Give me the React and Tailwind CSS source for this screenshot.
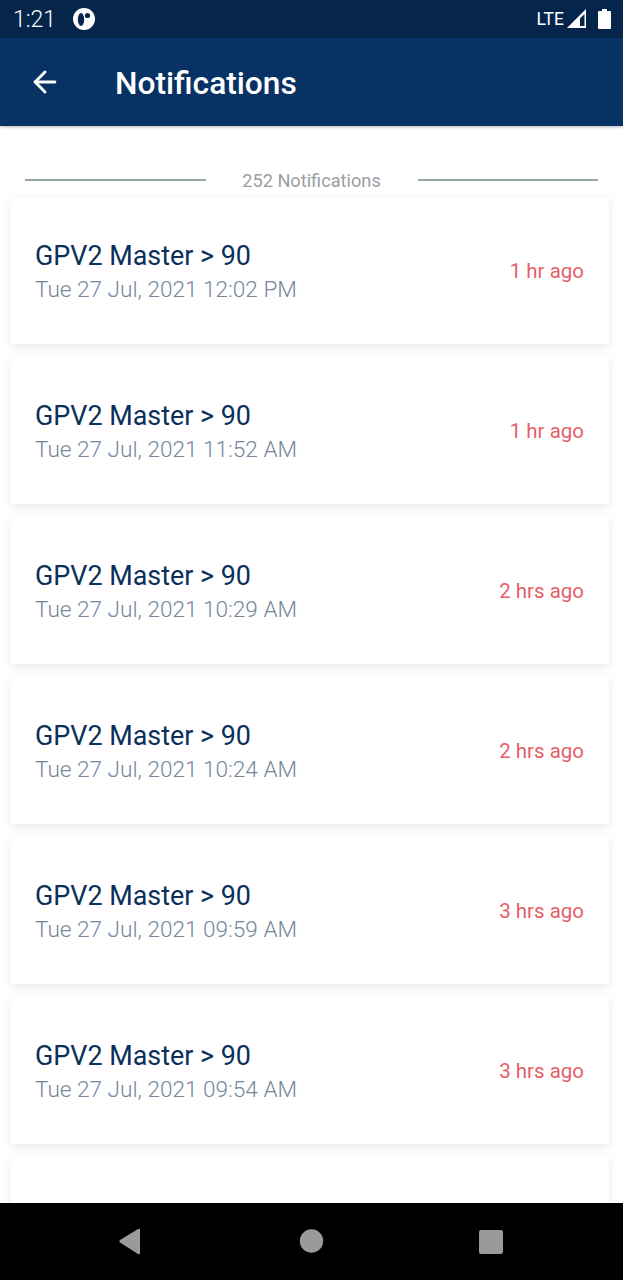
import React from 'react';
import { ArrowLeft } from 'lucide-react';

const notifications = [
  { date: 'Tue 27 Jul, 2021 12:02 PM', ago: '1 hr ago' },
  { date: 'Tue 27 Jul, 2021 11:52 AM', ago: '1 hr ago' },
  { date: 'Tue 27 Jul, 2021 10:29 AM', ago: '2 hrs ago' },
  { date: 'Tue 27 Jul, 2021 10:24 AM', ago: '2 hrs ago' },
  { date: 'Tue 27 Jul, 2021 09:59 AM', ago: '3 hrs ago' },
  { date: 'Tue 27 Jul, 2021 09:54 AM', ago: '3 hrs ago' },
];

const StatusBar = () => (
  <div className="h-[38px] shrink-0 bg-[#05264a] flex items-center pl-[13px] pr-[12px] text-white">
    <span className="text-[23px] font-light leading-none">1:21</span>
    <svg width="22" height="22" viewBox="0 0 22 22" className="ml-[17px]">
      <circle cx="11" cy="11" r="11" fill="#ffffff" />
      <ellipse cx="8" cy="11.5" rx="3.2" ry="6.5" fill="#05264a" />
      <circle cx="14.5" cy="7.5" r="2.6" fill="#05264a" />
    </svg>
    <span className="ml-auto text-[17.500px] leading-none pt-[1px]">LTE</span>
    <svg width="20" height="20" viewBox="0 0 20 20" className="ml-[3px]">
      <path d="M0 19 L19 0 V19 Z M13 17 H17.500 V5 L13 9.500 Z" fill="#ffffff" fillRule="evenodd" />
    </svg>
    <svg width="13" height="20" viewBox="0 0 13 20" className="ml-[11px]">
      <path d="M4 0 H9 V2 H12 A1 1 0 0 1 13 3 V19 A1 1 0 0 1 12 20 H1 A1 1 0 0 1 0 19 V3 A1 1 0 0 1 1 2 H4 Z" fill="#ffffff" />
    </svg>
  </div>
);

const Header = () => (
  <div className="h-[88px] shrink-0 bg-[#083263] flex items-center pl-[28px] text-white shadow-[0_1px_3px_rgba(0,0,0,0.3)] z-10">
    <ArrowLeft size={34} strokeWidth={2} />
    <span className="ml-[53px] pt-[3px] text-[31.700px] font-medium leading-none">Notifications</span>
  </div>
);

const Card = ({ date, ago }) => (
  <div className="h-[147px] shrink-0 bg-white flex items-center justify-between pl-[24px] pr-[25px] shadow-[0_3px_10px_rgba(0,0,0,0.09)]">
    <div className="pt-[5px]">
      <div className="text-[26.900px] leading-[33px] text-[#0b2f5b]">GPV2 Master &gt; 90</div>
      <div className="text-[22.600px] leading-[33px] font-light text-[#76869a]">{date}</div>
    </div>
    <div className="pt-[1px] text-[20.500px] text-[#e5606a]">{ago}</div>
  </div>
);

const NavBar = () => (
  <div className="h-[77px] shrink-0 bg-black relative z-10 flex items-center">
    <svg width="623" height="77" viewBox="0 0 623 77">
      <path d="M140 27 V50 Q140 52 138 51 L120 39.5 Q118.500 38.500 120 37 L138 26 Q140 25 140 27 Z" fill="#9a9a9a" />
      <circle cx="311.500" cy="38" r="11.700" fill="#9a9a9a" />
      <rect x="479" y="27" width="24" height="24" rx="2" fill="#9a9a9a" />
    </svg>
  </div>
);

export default function App() {
  return (
    <div className="w-[623px] h-[1280px] flex flex-col bg-white overflow-hidden font-['Roboto',sans-serif]">
      <StatusBar />
      <Header />
      <div className="flex-1 min-h-0 overflow-hidden flex flex-col">
        <div className="h-[71px] shrink-0 flex items-end pb-[6px] pl-[25px] pr-[25px]">
          <div className="flex-1 h-[2px] bg-[#97a1a8] mb-[10px]" />
          <span className="w-[212px] text-center text-[18.200px] leading-[20px] text-[#9a9ea3]">252 Notifications</span>
          <div className="flex-1 h-[2px] bg-[#97a1a8] mb-[10px]" />
        </div>
        <div className="flex flex-col gap-[13px] pl-[11px] pr-[14px]">
          {notifications.map((n) => (
            <Card key={n.date} date={n.date} ago={n.ago} />
          ))}
          <div className="h-[147px] shrink-0 bg-white shadow-[0_3px_10px_rgba(0,0,0,0.09)]" />
        </div>
      </div>
      <NavBar />
    </div>
  );
}
